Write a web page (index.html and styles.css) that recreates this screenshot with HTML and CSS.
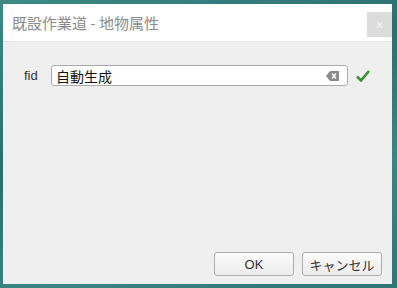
FILE: index.html
```html
<!DOCTYPE html>
<html lang="ja">
<head>
    <meta charset="UTF-8">
    <title>既設作業道 - 地物属性</title>
    <link rel="stylesheet" href="styles.css">
</head>
<body>
    <div class="dialog">
        <div class="dialog-title">
            <span class="title-text">既設作業道 - 地物属性</span>
            <button class="close-btn">&times;</button>
        </div>
        <div class="dialog-body">
            <div class="field-row">
                <label class="field-label">fid</label>
                <div class="field-input">
                    <span class="field-value">自動生成</span>
                    <svg class="clear-icon" width="13" height="10" viewBox="0 0 13 10">
                        <path d="M0 5 L4 0 H13 V10 H4 Z" fill="#8a8a8a"/>
                        <path d="M6 2.5 L10 7.5 M10 2.5 L6 7.5" stroke="#fff" stroke-width="1.4"/>
                    </svg>
                </div>
                <svg class="check-icon" width="14" height="12" viewBox="0 0 14 12">
                    <path d="M1 6.5 L5 10.5 L13 1" fill="none" stroke="#3f8f3a" stroke-width="2.6"/>
                </svg>
            </div>
        </div>
        <div class="dialog-footer">
            <button class="btn">OK</button>
            <button class="btn">キャンセル</button>
        </div>
    </div>
</body>
</html>
```

FILE: styles.css
```css
body {
    margin: 0;
    width: 397px;
    height: 288px;
    overflow: hidden;
    background: linear-gradient(160deg, #3d8a86, #2b6f70 40%, #3a8683 70%, #2f7574);
    font-family: "Noto Sans CJK JP", "Liberation Sans", sans-serif;
    padding: 4px 5px 4px 3px;
    box-sizing: border-box;
}
.dialog {
    width: 389px;
    height: 280px;
    background: #efefef;
    display: flex;
    flex-direction: column;
}
.dialog-title {
    height: 37px;
    background: #fff;
    border-bottom: 1px solid #e3e3e3;
    display: flex;
    align-items: center;
    justify-content: space-between;
    padding-left: 9px;
}
.title-text {
    color: #8c8c8c;
    font-size: 15px;
}
.close-btn {
    width: 25px;
    height: 25px;
    margin-top: 4px;
    border: none;
    background: #dcdcdc;
    color: #f4f4f4;
    font-size: 14px;
    padding: 0;
    font-family: "Liberation Sans", sans-serif;
}
.dialog-body {
    flex: 1;
    padding: 23px 0 0 21px;
}
.field-row {
    display: flex;
    align-items: center;
}
.field-label {
    font-family: "Liberation Sans", sans-serif;
    font-size: 13px;
    font-weight: normal;
    color: #333;
    width: 27px;
}
.field-input {
    width: 297px;
    height: 21px;
    box-sizing: border-box;
    background: #fff;
    border: 1px solid #a9a9a9;
    border-radius: 3px;
    display: flex;
    align-items: center;
    justify-content: space-between;
    padding: 0 8px 0 4px;
}
.field-value {
    font-size: 14px;
    color: #111;
}
.check-icon {
    margin-left: 8px;
}
.dialog-footer {
    display: flex;
    justify-content: flex-end;
    gap: 8px;
    padding: 0 10px 8px 0;
}
.btn {
    width: 80px;
    height: 24px;
    border: 1px solid #adadad;
    border-radius: 3px;
    background: linear-gradient(#fbfbfb, #ececec);
    font-family: "Liberation Sans", "Noto Sans CJK JP", sans-serif;
    font-size: 13px;
    color: #333;
    padding: 0;
}
```
